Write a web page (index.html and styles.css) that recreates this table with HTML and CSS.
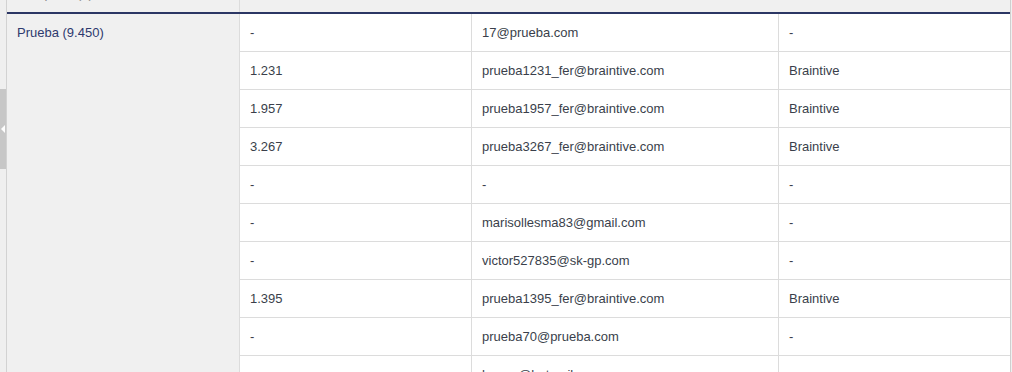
FILE: index.html
```html
<!DOCTYPE html>
<html lang="es">
<head>
<meta charset="utf-8">
<title>Contactos</title>
<link rel="stylesheet" href="styles.css">
</head>
<body>
<div class="page">
  <aside class="sidebar">
    <div class="tab"><span class="arrow"></span></div>
  </aside>
  <main class="main">
    <div class="grid">
      <div class="head head-first">Campaña (#)</div>
      <div class="head head-rest"></div>
      <div class="rule"></div>
      <div class="group"><span class="group-name">Prueba (9.450)</span></div>

      <div class="cell">-</div><div class="cell">17@prueba.com</div><div class="cell">-</div>
      <div class="cell">1.231</div><div class="cell">prueba1231_fer@braintive.com</div><div class="cell">Braintive</div>
      <div class="cell">1.957</div><div class="cell">prueba1957_fer@braintive.com</div><div class="cell">Braintive</div>
      <div class="cell">3.267</div><div class="cell">prueba3267_fer@braintive.com</div><div class="cell">Braintive</div>
      <div class="cell">-</div><div class="cell">-</div><div class="cell">-</div>
      <div class="cell">-</div><div class="cell">marisollesma83@gmail.com</div><div class="cell">-</div>
      <div class="cell">-</div><div class="cell">victor527835@sk-gp.com</div><div class="cell">-</div>
      <div class="cell">1.395</div><div class="cell">prueba1395_fer@braintive.com</div><div class="cell">Braintive</div>
      <div class="cell">-</div><div class="cell">prueba70@prueba.com</div><div class="cell">-</div>
      <div class="cell">-</div><div class="cell">hanna@hotmail.com</div><div class="cell">-</div>
    </div>
  </main>
</div>
</body>
</html>
```
FILE: styles.css
```css
html, body {
  margin: 0;
  padding: 0;
  height: 100%;
  overflow: hidden;
  background: #f0f0f0;
}

body {
  font-family: "Liberation Sans", Arial, sans-serif;
  font-size: 13px;
  color: #3a3f4b;
}

.page {
  display: flex;
  align-items: flex-start;
  height: 372px;
}

.sidebar {
  width: 6px;
  flex: none;
  align-self: stretch;
  background: #efefef;
  border-right: 1px solid #d2d2d2;
}

.tab {
  margin-top: 89px;
  height: 80px;
  background: #c7c7c7;
  display: flex;
  align-items: center;
  justify-content: flex-start;
  padding-left: 1px;
}

.arrow {
  width: 0;
  height: 0;
  border-top: 4px solid transparent;
  border-bottom: 4px solid transparent;
  border-right: 4px solid #ffffff;
}

.main {
  flex: none;
  width: 1005px;
  margin-top: -26px;
}

.grid {
  display: grid;
  width: 1004px;
  grid-template-columns: 232px 231px 306px 231px;
  grid-auto-rows: 38px;
  grid-template-rows: 38px 2px;
  column-gap: 1px;
  background: #dcdcdc;
  border-right: 1px solid #cfcfcf;
  box-sizing: border-box;
}

.head {
  background: #f0f0f0;
  display: flex;
  align-items: center;
  padding: 0 10px;
  color: #8a8a8a;
}

.head-first {
  grid-column: 1;
  grid-row: 1;
}

.head-rest {
  grid-column: 2 / span 3;
  grid-row: 1;
}

.rule {
  grid-column: 1 / -1;
  grid-row: 2;
  background: #2b3664;
}

.group {
  grid-column: 1;
  grid-row: 3 / span 10;
  background: #f0f0f0;
  padding: 0 10px;
  line-height: 37px;
  color: #2e3a6e;
}

.cell {
  background: #ffffff;
  border-bottom: 1px solid #dcdcdc;
  box-sizing: border-box;
  display: flex;
  align-items: center;
  padding: 0 10px;
  white-space: nowrap;
}

.grid > .cell:nth-child(3n+2) {
  grid-column: 2;
}
```
